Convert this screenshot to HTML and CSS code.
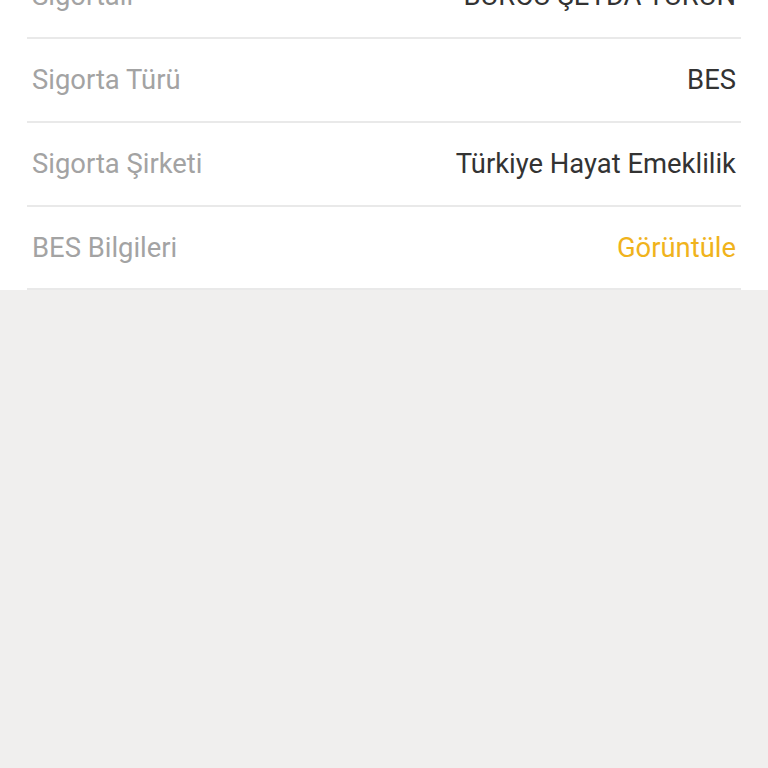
FILE: index.html
```html
<!DOCTYPE html>
<html lang="tr">
<head>
<meta charset="utf-8">
<title>Poliçe Detayı</title>
<link rel="stylesheet" href="styles.css">
</head>
<body>
<section class="details">
  <div class="row">
    <span class="label">Sigortalı</span>
    <span class="value">BURCU ŞEYDA TURUN</span>
  </div>
  <div class="row">
    <span class="label">Sigorta Türü</span>
    <span class="value">BES</span>
  </div>
  <div class="row">
    <span class="label">Sigorta Şirketi</span>
    <span class="value">Türkiye Hayat Emeklilik</span>
  </div>
  <div class="row">
    <span class="label">BES Bilgileri</span>
    <a class="value link" href="#">Görüntüle</a>
  </div>
</section>
</body>
</html>
```

FILE: styles.css
```css
html, body {
  margin: 0;
  padding: 0;
  height: 100%;
}

body {
  background: #f0efee;
  font-family: Roboto, "Noto Sans", "Liberation Sans", sans-serif;
  font-size: 27.4px;
  overflow: hidden;
}

.details {
  background: #ffffff;
  margin-top: -45px;
  padding: 0 27px;
}

.row {
  display: flex;
  align-items: center;
  justify-content: space-between;
  height: 82px;
  padding: 0 5px;
  border-bottom: 2px solid #e9e9e9;
}

.row:last-child {
  height: 81px;
}

.label {
  color: #a3a3a3;
}

.value {
  color: #333333;
}

.link {
  color: #f0b31c;
  text-decoration: none;
}
```
